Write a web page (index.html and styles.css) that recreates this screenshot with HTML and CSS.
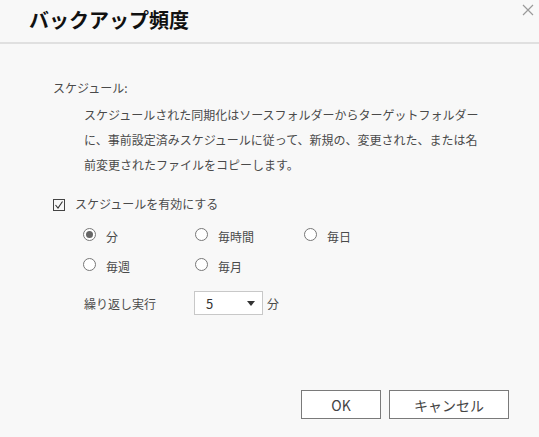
FILE: index.html
```html
<!DOCTYPE html>
<html lang="ja">
<head>
    <meta charset="UTF-8">
    <title>バックアップ頻度</title>
    <link rel="stylesheet" href="styles.css">
</head>
<body>
    <div class="dialog">
        <div class="header">
            <h1>バックアップ頻度</h1>
            <span class="close">
                <svg width="12" height="12" viewBox="0 0 12 12"><path d="M1 1 L11 11 M11 1 L1 11" stroke="#9a9a9a" stroke-width="1.2" fill="none"/></svg>
            </span>
        </div>
        <div class="content">
            <div class="section-label">スケジュール:</div>
            <p class="desc">スケジュールされた同期化はソースフォルダーからターゲットフォルダー<br>に、事前設定済みスケジュールに従って、新規の、変更された、または名<br>前変更されたファイルをコピーします。</p>

            <div class="check-row">
                <span class="checkbox">
                    <svg width="12" height="12" viewBox="0 0 12 12"><rect x="0.5" y="0.5" width="11" height="11" fill="none" stroke="#444"/><path d="M2.5 6 L5 9 L9.5 2.5" stroke="#333" stroke-width="1.1" fill="none"/></svg>
                </span>
                スケジュールを有効にする
            </div>

            <div class="radios">
                <div class="radio-item"><span class="radio checked"></span>分</div>
                <div class="radio-item"><span class="radio"></span>毎時間</div>
                <div class="radio-item"><span class="radio"></span>毎日</div>
                <div class="radio-item"><span class="radio"></span>毎週</div>
                <div class="radio-item"><span class="radio"></span>毎月</div>
            </div>

            <div class="repeat-row">
                <span class="repeat-label">繰り返し実行</span>
                <div class="select">
                    <span>5</span>
                    <span class="arrow"></span>
                </div>
                <span class="unit">分</span>
            </div>
        </div>
        <div class="footer">
            <button class="btn ok">OK</button>
            <button class="btn cancel">キャンセル</button>
        </div>
    </div>
</body>
</html>
```

FILE: styles.css
```css
body {
    margin: 0;
    background-color: #f8f8f8;
    font-family: "Noto Sans CJK JP", "Noto Sans", sans-serif;
    color: #4a4a4a;
    font-size: 12px;
}

.dialog {
    width: 539px;
    height: 437px;
}

.header {
    display: flex;
    justify-content: space-between;
    align-items: flex-start;
    height: 42px;
    padding-left: 29px;
    border-bottom: 2px solid #e0e0e0;
}

.header h1 {
    margin: 0;
    font-size: 20px;
    font-weight: bold;
    line-height: 40px;
    color: #111;
}

.close {
    margin-top: 4px;
    margin-right: 5px;
    line-height: 0;
}

.content {
    padding-left: 53px;
}

.section-label {
    margin-top: 34px;
    line-height: 20px;
}

.desc {
    margin: 4px 0 0 0;
    padding-left: 31px;
    line-height: 25px;
}

.check-row {
    display: flex;
    align-items: center;
    margin-top: 17px;
    line-height: 20px;
}

.checkbox {
    line-height: 0;
    margin-right: 10px;
    margin-top: 2px;
}

.radios {
    display: grid;
    grid-template-columns: 112px 109px auto;
    margin-top: 7px;
    padding-left: 30px;
}

.radio-item {
    display: flex;
    align-items: center;
    height: 30px;
}

.radio {
    box-sizing: border-box;
    width: 13px;
    height: 13px;
    border: 1px solid #777;
    border-radius: 50%;
    background: #fff;
    margin-right: 10px;
    margin-top: -3px;
    display: flex;
    align-items: center;
    justify-content: center;
}

.radio.checked::after {
    content: "";
    width: 7px;
    height: 7px;
    border-radius: 50%;
    background: #666;
}

.repeat-row {
    display: flex;
    align-items: center;
    margin-top: 10px;
    padding-left: 31px;
}

.repeat-label {
    width: 110px;
}

.select {
    box-sizing: border-box;
    display: flex;
    align-items: center;
    justify-content: space-between;
    width: 69px;
    height: 24px;
    padding: 0 7px 0 11px;
    border: 1px solid #c8c8c8;
    background: #fff;
    color: #333;
    font-size: 13px;
}

.arrow {
    width: 0;
    height: 0;
    border-left: 4px solid transparent;
    border-right: 4px solid transparent;
    border-top: 5px solid #333;
}

.unit {
    margin-left: 4px;
}

.footer {
    display: flex;
    justify-content: flex-end;
    gap: 8px;
    margin-top: 75px;
    padding-right: 30px;
}

.btn {
    height: 29px;
    border: 1px solid #7a7a7a;
    background: #fff;
    color: #444;
    font-family: "Noto Sans CJK JP", "Noto Sans", sans-serif;
    font-size: 14px;
    padding: 0;
}

.ok {
    width: 80px;
}

.cancel {
    width: 120px;
}
```
